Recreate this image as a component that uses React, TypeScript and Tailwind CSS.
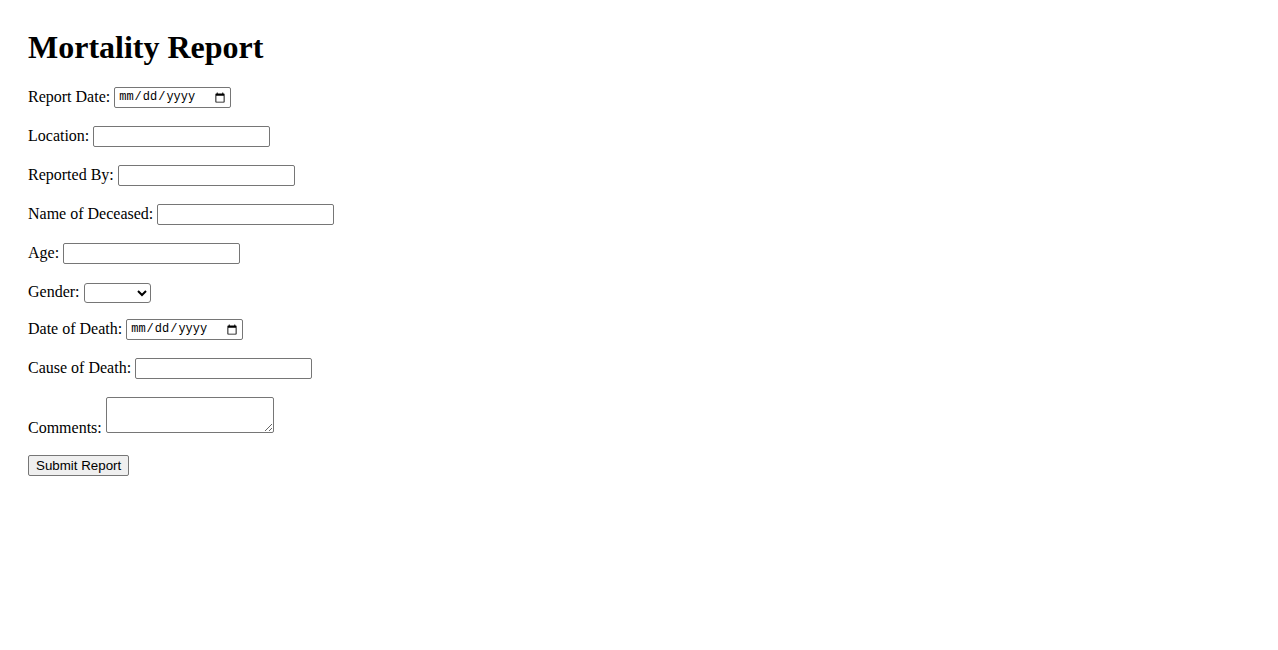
import React from 'react';

const textInput =
    "w-[177px] h-[21px] border border-[#767676] rounded-[2px] bg-white px-[2px] text-[13.33px] align-baseline [font-family:'Liberation_Sans',Arial,sans-serif]";
const dateInput =
    "w-[117px] h-[21px] border border-[#767676] rounded-[2px] bg-white pl-[3px] pr-[2px] text-[12px] text-black align-[2px] [font-family:'Liberation_Mono','DejaVu_Sans_Mono',monospace]";

export default function App() {
    // Rows of the form, in order
    const fields: { label: string; kind: 'text' | 'date'; gap: string }[] = [
        { label: 'Report Date:', kind: 'date', gap: 'mb-4 pt-[2px]' },
        { label: 'Location:', kind: 'text', gap: 'mb-4' },
        { label: 'Reported By:', kind: 'text', gap: 'mb-4' },
        { label: 'Name of Deceased:', kind: 'text', gap: 'mb-4' },
        { label: 'Age:', kind: 'text', gap: 'mb-[17px]' },
    ];

    return (
        <div className="min-h-screen bg-white pl-7 pt-[29px] text-black text-[16px] [font-family:'Liberation_Serif','Times_New_Roman',serif]">
            <h1 className="text-[32px] font-bold leading-[37px] mb-[17px]">Mortality Report</h1>

            <form onSubmit={(e) => e.preventDefault()}>
                {fields.map((f) => (
                    <div key={f.label} className={`${f.gap} leading-[23px]`}>
                        <label>{f.label} </label>
                        <input type={f.kind} className={f.kind === 'date' ? dateInput : textInput} />
                    </div>
                ))}

                <div className="mb-[14px] leading-[22px]">
                    <label>Gender: </label>
                    <select className="w-[67px] h-[20px] border border-[#767676] rounded-[3px] bg-white text-[13.33px] align-baseline [font-family:'Liberation_Sans',Arial,sans-serif]">
                        <option value=""></option>
                        <option value="male">Male</option>
                        <option value="female">Female</option>
                    </select>
                </div>

                <div className="mb-4 leading-[23px]">
                    <label>Date of Death: </label>
                    <input type="date" className={dateInput} />
                </div>

                <div className="mb-[18px] leading-[23px]">
                    <label>Cause of Death: </label>
                    <input type="text" className={textInput} />
                </div>

                <div className="mb-[14px] leading-[23px]">
                    <label>Comments: </label>
                    <textarea className="w-[168px] h-[36px] border border-[#767676] rounded-[2px] bg-white px-[2px] text-[13.33px] align-baseline [font-family:'Liberation_Mono',monospace]" />
                </div>

                <button
                    type="submit"
                    className="h-[21px] px-[7px] border border-[#767676] rounded-[2px] bg-[#efefef] text-[13.33px] leading-[17px] [font-family:'Liberation_Sans',Arial,sans-serif] hover:bg-[#e5e5e5]"
                >
                    Submit Report
                </button>
            </form>
        </div>
    );
}
